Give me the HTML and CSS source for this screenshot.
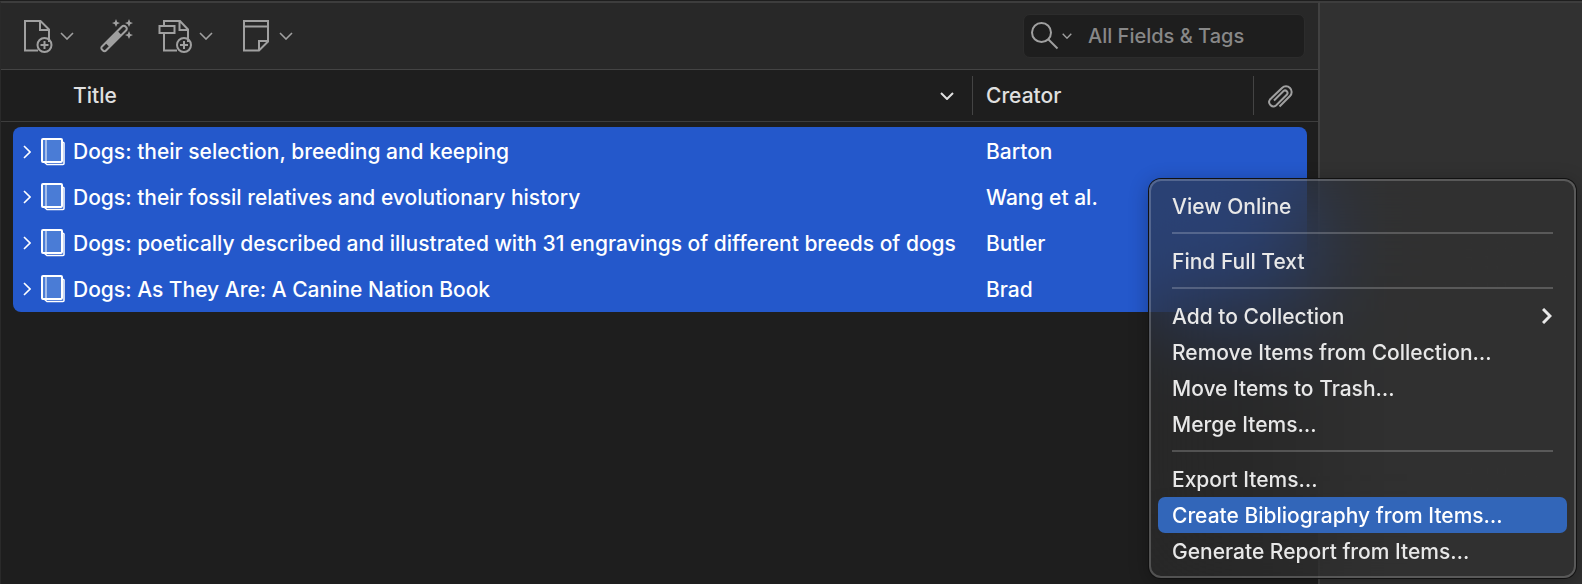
FILE: index.html
```html
<!DOCTYPE html>
<html lang="en">
<head>
  <meta charset="UTF-8" />
  <meta name="viewport" content="width=device-width, initial-scale=1" />
  <title>Library</title>
  <link rel="stylesheet" href="styles.css">
</head>
<body>

  <!-- shared icons -->
  <svg class="defs" aria-hidden="true">
    <symbol id="down" viewBox="0 0 14 8"><path d="M1 1l6 6 6-6" /></symbol>
    <symbol id="right" viewBox="0 0 8 14"><path d="M1 1l6 6-6 6" /></symbol>
    <symbol id="book" viewBox="0 0 24 28">
      <path d="M2 1h18a1 1 0 0 1 1 1v21a1 1 0 0 1-1 1H2a1 1 0 0 1-1-1V2a1 1 0 0 1 1-1z" fill="#4a7cd6" stroke-width="2" />
      <path d="M5 1v22" stroke-width="1" />
      <path d="M22 4l1 1v20.500a1 1 0 0 1-1 1H6l-3-2.500" stroke-width="1.500" />
    </symbol>
  </svg>

  <div class="window">
    <main class="main">
      <div class="toolbar">
        <button class="tool" aria-label="New Item">
          <svg width="30" height="34" viewBox="0 0 30 34">
            <path d="M15 31.500H2V2h15.500l8.500 8.500V23M17 2v9h9" />
            <circle cx="21.500" cy="26" r="7" />
            <path d="M21.500 22v8M17.500 26h8" />
          </svg>
          <svg class="arrow" width="14" height="8"><use href="#down" /></svg>
        </button>
        <button class="tool" aria-label="Add Item by Identifier">
          <svg width="34" height="34" viewBox="0 0 34 34">
            <path d="M3 27.500L23 7.500a2.300 2.300 0 0 1 3.500 0l.5.5a2.300 2.300 0 0 1 0 3.500L7 31.500a2 2 0 0 1-3 0l-1-1a2 2 0 0 1 0-3z" />
            <path d="M8.500 26L20.500 14" stroke-width="5" />
            <path class="solid" d="M17 0l1.200 3L21 4l-2.800 1.200L17 8l-1.200-2.800L13 4l2.800-1zM30 0l1.200 3L34 4l-2.800 1.200L30 8l-1.200-2.800L26 4l2.800-1zM30 12l1.200 3 2.800 1-2.800 1.200L30 20l-1.200-2.800L26 16l2.800-1z" />
          </svg>
        </button>
        <button class="tool" aria-label="Add Attachment">
          <svg width="34" height="34" viewBox="0 0 34 34">
            <path d="M1.500 7h15v7h-15zM6 7V2h16l8 8.500V23M21.500 2v9H30M6 14v17.500h13" />
            <circle cx="26" cy="26" r="7" />
            <path d="M26 22v8M22 26h8" />
          </svg>
          <svg class="arrow" width="14" height="8"><use href="#down" /></svg>
        </button>
        <button class="tool" aria-label="New Note">
          <svg width="34" height="34" viewBox="-4 0 34 34">
            <path d="M2 2h24v20.500l-9 9H2zM2 7.500h24M26 22h-9v9" />
          </svg>
          <svg class="arrow" width="14" height="8"><use href="#down" /></svg>
        </button>

        <div class="search">
          <button class="search-mode" aria-label="Search Mode">
            <svg width="28" height="28" viewBox="0 0 28 28">
              <circle cx="10.500" cy="10.500" r="9.500" />
              <path d="M17.500 17.500l9 9" />
            </svg>
            <svg width="10" height="6"><use href="#down" /></svg>
          </button>
          <input type="search" aria-label="Search" placeholder="All Fields &amp; Tags">
        </div>
      </div>

      <div class="items">
        <table>
          <thead>
            <tr>
              <th class="col-title"><span class="head">Title <svg class="sort" width="14" height="8"><use href="#down" /></svg></span></th>
              <th class="col-creator"><span class="head">Creator</span></th>
              <th class="col-file" aria-label="Attachments">
                <span class="head">
                  <svg class="clip" width="26" height="26" viewBox="0 0 26 26">
                    <path d="M12.500 23.500L23 13a5.500 5.500 0 0 0-8-8L3 16.500a4.300 4.300 0 0 0 6 6L20 11.500a2.500 2.500 0 0 0-3.500-3.500L7 17.500" />
                  </svg>
                </span>
              </th>
            </tr>
          </thead>
          <tbody>
            <tr>
              <td><div class="item"><svg class="arrow" width="8" height="14"><use href="#right" /></svg><svg class="book" width="24" height="28"><use href="#book" /></svg>Dogs: their selection, breeding and keeping</div></td>
              <td class="creator">Barton</td>
              <td></td>
            </tr>
            <tr>
              <td><div class="item"><svg class="arrow" width="8" height="14"><use href="#right" /></svg><svg class="book" width="24" height="28"><use href="#book" /></svg>Dogs: their fossil relatives and evolutionary history</div></td>
              <td class="creator">Wang et al.</td>
              <td></td>
            </tr>
            <tr>
              <td><div class="item"><svg class="arrow" width="8" height="14"><use href="#right" /></svg><svg class="book" width="24" height="28"><use href="#book" /></svg>Dogs: poetically described and illustrated with 31 engravings of different breeds of dogs</div></td>
              <td class="creator">Butler</td>
              <td></td>
            </tr>
            <tr>
              <td><div class="item"><svg class="arrow" width="8" height="14"><use href="#right" /></svg><svg class="book" width="24" height="28"><use href="#book" /></svg>Dogs: As They Are: A Canine Nation Book</div></td>
              <td class="creator">Brad</td>
              <td></td>
            </tr>
          </tbody>
        </table>
      </div>
    </main>
    <aside class="side"></aside>
  </div>

  <div class="menu" role="menu">
    <button role="menuitem">View Online</button>
    <hr>
    <button role="menuitem">Find Full Text</button>
    <hr>
    <button role="menuitem">Add to Collection <svg width="10" height="16" viewBox="0 0 10 16"><path d="M1 1l7 7-7 7" /></svg></button>
    <button role="menuitem">Remove Items from Collection…</button>
    <button role="menuitem">Move Items to Trash…</button>
    <button role="menuitem">Merge Items…</button>
    <hr>
    <button role="menuitem">Export Items…</button>
    <button role="menuitem" class="active">Create Bibliography from Items…</button>
    <button role="menuitem">Generate Report from Items…</button>
  </div>

</body>
</html>
```
FILE: styles.css
```css
* {
  box-sizing: border-box;
}
body {
  margin: 0;
  background: #1e1e1e;
  color: #fff;
  font-family: Inter, "Liberation Sans", sans-serif;
  font-size: 21px;
  font-weight: 500;
  overflow: hidden;
}
button, input {
  font: inherit;
  color: inherit;
  background: none;
  border: none;
  padding: 0;
}
svg {
  display: block;
  flex: none;
  fill: none;
  stroke: currentColor;
  stroke-width: 2;
}
.defs {
  position: absolute;
  width: 0;
  height: 0;
}
.arrow {
  stroke-width: 1.6;
}
.window {
  display: grid;
  grid-template-columns: 1fr 262px;
  min-height: 100vh;
  border-top: 1px solid #1e1e1e;
}
.main {
  border-left: 1px solid #2a2a2a;
  border-right: 2px solid #414141;
  border-top: 2px solid #3d3d3d;
}
.side {
  background: #313131;
  border-top: 2px solid #3d3d3d;
}

/* toolbar */
.toolbar {
  display: flex;
  align-items: center;
  gap: 25px;
  height: 67px;
  padding: 0 13px 0 22px;
  background: #282828;
  border-bottom: 1px solid #444;
  color: #a0a0a0;
}
.tool {
  display: flex;
  align-items: center;
  gap: 7px;
}
.search {
  display: flex;
  align-items: center;
  gap: 16px;
  width: 282px;
  height: 44px;
  margin-left: auto;
  padding: 0 7px;
  background: #1e1e1e;
  border: 1px solid #2c2c2c;
  border-radius: 7px;
}
.search-mode {
  display: flex;
  align-items: center;
  gap: 3px;
}
.search input {
  flex: 1;
  min-width: 0;
  outline: none;
  font-size: 20px;
}
.search input::placeholder {
  color: #888;
}

/* items list */
.items {
  padding: 0 11px 0 12px;
  background: linear-gradient(#3d3d3d, #3d3d3d) 0 51px / 100% 1px no-repeat;
}
table {
  width: 100%;
  table-layout: fixed;
  border-collapse: separate;
  border-spacing: 0;
}
th, td {
  padding: 0;
  text-align: left;
  white-space: nowrap;
}
th {
  height: 57px;
  padding: 6px 0 12px;
  color: #e0e0e0;
  font-weight: 500;
}
.head {
  display: flex;
  align-items: center;
  height: 39px;
  padding-left: 13px;
  border-left: 1px solid #444;
}
.col-title .head {
  padding: 0 18px 0 60px;
  border-left: none;
}
.col-creator {
  width: 281px;
}
.col-file {
  width: 54px;
}
.sort {
  margin-left: auto;
}
.clip {
  color: #a0a0a0;
}
td {
  height: 46px;
  background: #2458cb;
}
tbody tr:first-child td {
  height: 47px;
  padding-top: 2px;
}
.item {
  display: flex;
  align-items: center;
  padding-left: 10px;
}
.book {
  margin: 0 8px 0 10px;
}
.creator {
  padding-left: 14px;
}
tbody tr:first-child td:first-child {
  border-top-left-radius: 8px;
}
tbody tr:first-child td:last-child {
  border-top-right-radius: 8px;
}
tbody tr:last-child td:first-child {
  border-bottom-left-radius: 8px;
}
tbody tr:last-child td:last-child {
  border-bottom-right-radius: 8px;
}

/* context menu */
.menu {
  position: absolute;
  top: 179px;
  right: 6px;
  width: 427px;
  padding: 7px;
  background: rgba(49, 49, 49, 0.56);
  -webkit-backdrop-filter: blur(50px);
  backdrop-filter: blur(50px);
  border: 2px solid rgba(255, 255, 255, 0.2);
  border-radius: 12px;
  box-shadow: 0 0 0 1px #111, 0 4px 20px rgba(0, 0, 0, 0.3);
  color: #e8e8e8;
}
.menu button {
  display: flex;
  align-items: center;
  justify-content: space-between;
  width: 100%;
  height: 36px;
  padding: 0 15px 0 14px;
  border-radius: 7px;
}
.menu svg {
  stroke-width: 3;
}
.menu .active {
  background: #3266b9;
  color: #fff;
}
.menu hr {
  height: 2px;
  margin: 8px 14px 9px;
  border: none;
  background: rgba(255, 255, 255, 0.2);
}
.solid {
  fill: currentColor;
  stroke: none;
}
```
